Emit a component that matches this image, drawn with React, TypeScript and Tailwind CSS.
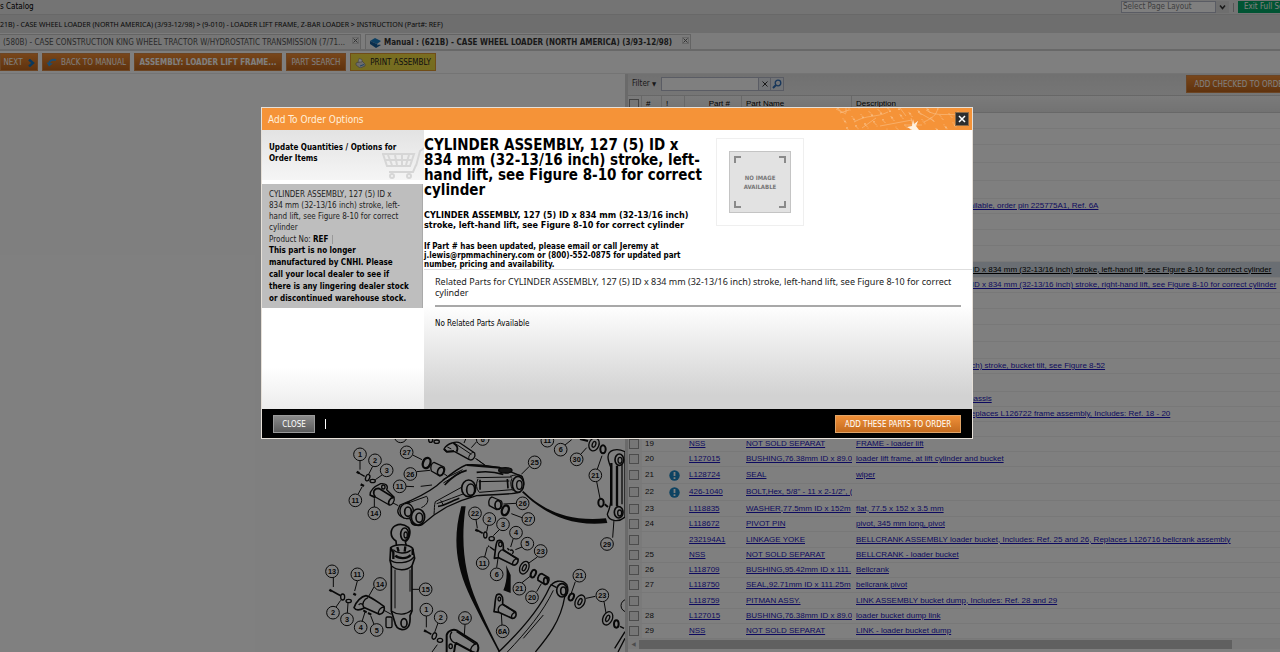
import React from "react";

type Row = {
  h: string;
  no?: string;
  alert?: boolean;
  part?: string;
  name?: string;
  desc?: string;
  indent?: string;
  active?: boolean;
};

const H15 = "h-[15px]";
const H16 = "h-[16px]";
const H17 = "h-[17px]";
const H18 = "h-[18px]";

const ROWS: Row[] = [
  { h: H16 },
  { h: H16 },
  { h: H18 },
  { h: H18 },
  { h: H18 },
  { h: H15, desc: "available, order pin 225775A1, Ref. 6A", indent: "pl-[109px]" },
  { h: H16 },
  { h: H16 },
  { h: H16 },
  {
    h: H16,
    active: true,
    desc: "CYLINDER ASSEMBLY, 127 (5) ID x 834 mm (32-13/16 inch) stroke, left-hand lift, see Figure 8-10 for correct cylinder",
  },
  {
    h: H15,
    desc: "CYLINDER ASSEMBLY, 127 (5) ID x 834 mm (32-13/16 inch) stroke, right-hand lift, see Figure 8-10 for correct cylinder",
  },
  { h: H16 },
  { h: H16 },
  { h: H17 },
  { h: H17 },
  { h: H15, desc: "inch) stroke, bucket tilt, see Figure 8-52", indent: "pl-[113px]" },
  { h: H18 },
  { h: H15, desc: "chassis", indent: "pl-[113px]" },
  { h: H15, desc: "Replaces L126722 frame assembly, Includes: Ref. 18 - 20", indent: "pl-[113px]" },
  { h: H15 },
  { h: H15, no: "19", part: "NSS", name: "NOT SOLD SEPARAT", desc: "FRAME - loader lift" },
  { h: H15, no: "20", part: "L127015", name: "BUSHING,76.38mm ID x 89.0", desc: "loader lift frame, at lift cylinder and bucket" },
  { h: H17, no: "21", alert: true, part: "L128724", name: "SEAL", desc: "wiper" },
  { h: H17, no: "22", alert: true, part: "426-1040", name: "BOLT,Hex, 5/8\" - 11 x 2-1/2\", (" },
  { h: H16, no: "23", part: "L118835", name: "WASHER,77.5mm ID x 152m", desc: "flat, 77.5 x 152 x 3.5 mm" },
  { h: H15, no: "24", part: "L118672", name: "PIVOT PIN", desc: "pivot, 345 mm long, pivot" },
  { h: H16, part: "232194A1", name: "LINKAGE YOKE", desc: "BELLCRANK ASSEMBLY loader bucket, Includes: Ref. 25 and 26, Replaces L126716 bellcrank assembly" },
  { h: H15, no: "25", part: "NSS", name: "NOT SOLD SEPARAT", desc: "BELLCRANK - loader bucket" },
  { h: H15, no: "26", part: "L118709", name: "BUSHING,95.42mm ID x 111.", desc: "Bellcrank" },
  { h: H15, no: "27", part: "L118750", name: "SEAL,92.71mm ID x 111.25m", desc: "bellcrank pivot" },
  { h: H16, part: "L118759", name: "PITMAN ASSY.", desc: "LINK ASSEMBLY bucket dump, Includes: Ref. 28 and 29" },
  { h: H15, no: "28", part: "L127015", name: "BUSHING,76.38mm ID x 89.0", desc: "loader bucket dump link" },
  { h: H15, no: "29", part: "NSS", name: "NOT SOLD SEPARAT", desc: "LINK - loader bucket dump" },
];

const LABELS: [number, number, string][] = [
  [150, 58, "1"], [195, 76, "2"], [230, 106, "3"], [290, 52, "27"], [301, 117, "26"],
  [269, 154, "11"], [136, 196, "11"], [193, 235, "14"], [674, 82, "25"], [752, 44, "6"],
  [800, 73, "30"], [856, 121, "21"], [712, 17, "11"], [518, 12, "6"], [272, 4, "1"],
  [638, 205, "26"], [655, 252, "27"], [495, 235, "22"], [538, 252, "2"], [579, 268, "3"],
  [618, 293, "4"], [652, 326, "5"], [692, 348, "23"], [518, 384, "11"], [560, 418, "6"],
  [628, 461, "21"], [666, 487, "20"], [808, 422, "21"], [877, 481, "23"], [578, 589, "6A"],
  [891, 327, "29"], [66, 409, "13"], [142, 418, "11"], [210, 447, "14"], [347, 463, "15"],
  [69, 533, "2"], [111, 553, "3"], [152, 577, "4"], [200, 585, "5"], [349, 524, "1"],
  [392, 547, "2"], [465, 549, "24"], [952, 512, "2"],
];

function Diagram() {
  return (
    <svg viewBox="0 0 945 651" className="h-[217px] w-[315px] shrink-0" fill="none" stroke="#111" strokeWidth="4" strokeLinejoin="round">
      {/* leader lines */}
      <path
        strokeWidth="3"
        d="M150 77V104M188 94l-12 24M216 120l-20 14M308 60l28 14M320 110l40-4M288 154l24 1M332 154l34-4M144 178l12-22M193 216V190M658 94l-24 24M400 115l12 8M496 70l28 20M500 20l-16 18M468 10l-6 14M765 30l20-16M812 58l18-20M862 102l14-40M860 140l10 50M908 308l4-54M580 207l38-2M604 236l32 12M498 254l4 26M534 270l-4 20M568 284l-18 18M610 310l-8 26M636 336l-20 8M682 366l-28 20M524 366l8-30M560 398l4-28M636 443l28-22M680 470l14-24M796 440l-12 34M856 484l-28 6M882 500l6 34M576 570l-2-34M70 428V456M142 438l-8 30M192 456l-16 28M328 463H306M78 516l14-20M112 534l2-30M156 560l10-32M192 568l-10-26M349 543v34M384 564l-10 28M465 569l-2 30M366 651l16-22M245 202l20 10M222 526l22 12M500 72l30 22M240 98l-5-2"
      />
      {/* bellcrank arm */}
      <path d="M270 210C320 190 350 175 380 152C410 128 440 100 468 90C500 86 530 92 570 98L636 124C646 140 642 160 626 172C600 180 540 178 500 182C470 190 430 206 410 216L372 240L338 268C324 276 304 270 300 250C280 254 260 240 264 224Z" fill="#fff" />
      <path strokeWidth="6" d="M272 216L300 200M304 260C308 274 328 272 338 264M470 90L570 98" />
      <path d="M300 202L350 184C358 196 352 210 334 218M372 238C374 222 372 212 376 200L456 156M500 128L606 126M504 132C496 150 500 162 508 172L606 164M506 140L598 138M380 206C410 196 440 184 462 176M392 196l8 14M600 124C612 120 630 116 638 126M606 130c-6 12-4 26 4 38M398 134l60-30M400 144l60-36" strokeWidth="3" />
      <path strokeWidth="5" d="M404 150C420 132 446 112 470 106M500 112C530 108 560 112 580 118M384 214C400 214 430 196 448 190M510 134v30M592 132l2 28" />
      <ellipse cx="290" cy="228" rx="20" ry="23" fill="#fff" />
      <ellipse cx="294" cy="230" rx="10" ry="14" strokeWidth="5" />
      <ellipse cx="324" cy="246" rx="20" ry="24" fill="#fff" strokeWidth="5" />
      <ellipse cx="328" cy="248" rx="10" ry="14" strokeWidth="5" />
      <ellipse cx="476" cy="160" rx="21" ry="25" fill="#fff" strokeWidth="5" />
      <ellipse cx="482" cy="164" rx="12" ry="17" strokeWidth="5" />
      <ellipse cx="624" cy="148" rx="17" ry="24" fill="#fff" strokeWidth="5" />
      <ellipse cx="628" cy="150" rx="8" ry="13" strokeWidth="4" />
      <ellipse cx="586" cy="106" rx="20" ry="8" fill="#333" />
      {/* top pin */}
      <path d="M402 42C412 24 440 18 450 24L494 54C498 66 488 78 478 74L434 50L410 50Z" fill="#fff" />
      <path strokeWidth="6" d="M402 42L410 50L432 48M430 24C440 30 446 40 440 50" />
      <path strokeWidth="3" d="M436 26l48 32M478 74c-6-8 4-22 14-22M412 36l12 6" />
      <ellipse cx="362" cy="14" rx="6" ry="8" /><ellipse cx="380" cy="20" rx="8" ry="5" />
      {/* seals and bushings */}
      <ellipse cx="350" cy="84" rx="11" ry="16" strokeWidth="7" transform="rotate(20 350 84)" />
      <path d="M372 82L402 96C408 106 398 124 388 122L364 108C360 96 364 84 372 82Z" fill="#fff" />
      <ellipse cx="392" cy="109" rx="9" ry="13" strokeWidth="5" transform="rotate(20 392 109)" />
      <path d="M546 186L574 198C580 210 572 224 560 224L538 212C534 200 538 188 546 186Z" fill="#fff" />
      <ellipse cx="564" cy="210" rx="9" ry="13" strokeWidth="5" />
      <ellipse cx="586" cy="226" rx="10" ry="15" strokeWidth="7" transform="rotate(20 586 226)" />
      {/* left pin group */}
      <path strokeWidth="7" d="M140 110l8 5M152 148l10 5" />
      <path d="M146 114l18 10" />
      <ellipse cx="173" cy="128" rx="6" ry="10" transform="rotate(20 173 128)" /><ellipse cx="188" cy="138" rx="8" ry="5" />
      <path d="M180 180C180 168 190 156 212 146C228 144 236 152 230 164L252 186C256 198 246 212 238 210L196 186Z" fill="#fff" />
      <path strokeWidth="5" d="M180 180L196 188M196 186C186 172 192 160 206 160L252 188M238 210c-6-8 2-22 12-22" />
      <ellipse cx="220" cy="156" rx="5" ry="6" />
      {/* sweep curves */}
      <path fill="#111" stroke="none" d="M454 214h13C450 330 466 420 500 500C524 556 550 610 572 651h-6C532 585 496 520 474 470C434 380 430 300 454 214Z" />
      <path fill="#111" stroke="none" d="M640 168C690 216 760 262 888 250l4 14C770 278 690 224 636 172Z" />
      <path fill="#111" stroke="none" d="M588 390L602 420V474L580 466C590 440 592 420 588 390Z" />
      {/* link */}
      <path d="M894 66C894 44 920 38 945 50V246C925 264 896 258 892 238C896 226 902 214 902 200V96C898 86 894 76 894 66Z" fill="#fff" />
      <path strokeWidth="7" d="M904 84V212M921 92V214" />
      <path d="M936 88V208" />
      <ellipse cx="928" cy="74" rx="13" ry="17" strokeWidth="5" />
      <ellipse cx="930" cy="76" rx="6" ry="9" />
      <ellipse cx="926" cy="232" rx="13" ry="17" strokeWidth="5" />
      <ellipse cx="929" cy="234" rx="6" ry="9" />
      <ellipse cx="852" cy="28" rx="15" ry="20" transform="rotate(20 852 28)" /><ellipse cx="852" cy="28" rx="5" ry="9" transform="rotate(20 852 28)" />
      <ellipse cx="879" cy="43" rx="8" ry="12" strokeWidth="6" /><ellipse cx="873" cy="203" rx="8" ry="12" strokeWidth="6" />
      <path strokeWidth="6" d="M810 12l24 6M884 208l10 8" />
      {/* cylinder */}
      <path d="M258 318C238 306 240 282 256 272C268 266 284 268 296 278C304 290 298 314 286 320L290 338H260Z" fill="#fff" strokeWidth="5" />
      <ellipse cx="284" cy="298" rx="12" ry="19" strokeWidth="5" />
      <ellipse cx="287" cy="300" rx="5" ry="9" />
      <path d="M242 338C256 326 296 326 308 340L314 370L306 392V528L300 542C302 572 294 584 276 584C262 582 256 574 254 560L244 528V392L240 376Z" fill="#fff" strokeWidth="5" />
      <path d="M240 374C256 388 296 386 312 366M246 394C262 408 290 408 306 392M244 528C264 542 288 540 304 526M250 344c10 12 40 14 52 2" />
      <path strokeWidth="7" d="M242 340l8 12v20M308 342v18M262 336l4 14M286 334l-2 16M256 362c10 10 36 10 46-2" />
      <path strokeWidth="3" d="M255 404V520M300 404V470" />
      <rect x="228" y="546" width="18" height="32" rx="4" fill="#fff" />
      <ellipse cx="282" cy="564" rx="9" ry="13" strokeWidth="5" />
      {/* lower-left pin group */}
      <path strokeWidth="7" d="M58 464l8 5M130 476l8 4" />
      <path d="M66 468l26 14" strokeWidth="5" />
      <ellipse cx="98" cy="486" rx="6" ry="9" /><ellipse cx="116" cy="498" rx="8" ry="5" />
      <path d="M132 518C138 500 154 484 168 482C180 484 190 492 222 514C226 526 218 538 208 538L164 518C150 526 138 528 132 518Z" fill="#fff" strokeWidth="5" />
      <path d="M162 518c-8-12 0-26 12-30M146 510c4-6 10-6 14 2M206 538c-4-10 6-22 16-22" />
      <path strokeWidth="6" d="M160 526l10 6M174 534l10 5" />
      {/* lower-centre pin group */}
      <path strokeWidth="7" d="M342 586l6 3" /><path d="M346 588l18 10" strokeWidth="5" />
      <ellipse cx="373" cy="603" rx="6" ry="10" transform="rotate(20 373 603)" /><ellipse cx="390" cy="616" rx="8" ry="6" />
      <path d="M410 655V600C414 586 430 582 440 586L500 624C508 634 506 644 500 655L486 650L438 624C432 634 436 646 430 655Z" fill="#fff" strokeWidth="6" />
      <path d="M426 590C416 602 420 618 436 624M440 590l58 38M482 650c-2-10 6-22 18-24" strokeWidth="4" />
      <ellipse cx="422" cy="634" rx="5" ry="7" />
      {/* middle pin group */}
      <path strokeWidth="7" d="M496 284l8 4" /><path d="M502 286l16 9" strokeWidth="5" />
      <ellipse cx="526" cy="300" rx="5" ry="9" /><ellipse cx="545" cy="311" rx="8" ry="6" />
      <path d="M553 370C556 352 556 330 562 318C572 312 580 320 580 334V346L624 372C626 382 618 392 610 390L566 368Z" fill="#fff" strokeWidth="5" />
      <path d="M566 368c-4-12 4-24 14-24l44 30M608 390c-2-10 6-20 16-18" /><ellipse cx="571" cy="328" rx="5" ry="7" />
      <path d="M592 340l6 6M600 346c8-4 14 6 6 10M534 332l4 3M540 336l14 10" strokeWidth="4" />
      <ellipse cx="643" cy="398" rx="13" ry="20" transform="rotate(25 643 398)" /><ellipse cx="643" cy="398" rx="5" ry="10" transform="rotate(25 643 398)" />
      <ellipse cx="670" cy="416" rx="7" ry="12" strokeWidth="6" transform="rotate(25 670 416)" />
      <path d="M696 416L716 428C720 438 712 450 704 448L684 436C682 426 688 416 696 416Z" fill="#fff" strokeWidth="5" />
      <ellipse cx="707" cy="438" rx="6" ry="10" strokeWidth="5" />
      <path d="M552 530C556 510 554 492 560 480C570 472 580 482 578 500V508L616 530C622 542 614 552 606 550L566 532Z" fill="#fff" strokeWidth="5" />
      <path d="M566 532c-4-12 2-22 12-24l40 26M606 550c-4-8 2-18 12-18" /><ellipse cx="568" cy="492" rx="4" ry="6" />
      {/* loader arm */}
      <path d="M566 651C640 580 690 520 718 458C730 436 756 432 770 448C776 462 774 476 764 486C752 560 710 610 676 651" fill="#fff" />
      <path strokeWidth="3" d="M592 651C650 590 700 530 730 466M700 540L640 610" />
      <ellipse cx="756" cy="466" rx="16" ry="20" strokeWidth="5" /><ellipse cx="760" cy="468" rx="8" ry="12" strokeWidth="5" />
      <path d="M722 448l18 10M945 590L914 640M945 610L924 651" />
      <ellipse cx="784" cy="486" rx="7" ry="11" strokeWidth="6" transform="rotate(25 784 486)" />
      <ellipse cx="810" cy="500" rx="14" ry="21" transform="rotate(25 810 500)" /><ellipse cx="810" cy="500" rx="5" ry="10" transform="rotate(25 810 500)" />
      <ellipse cx="893" cy="550" rx="14" ry="21" transform="rotate(25 893 550)" /><ellipse cx="893" cy="550" rx="5" ry="10" transform="rotate(25 893 550)" />
      <ellipse cx="919" cy="567" rx="7" ry="11" strokeWidth="6" /><path d="M930 574l12 6" />
      <g strokeWidth="3">
        {LABELS.map(([x, y], i) => (
          <circle key={i} cx={x} cy={y} r="19" fill="#fff" />
        ))}
      </g>
      <g fill="#111" stroke="none" fontSize="22" fontWeight="700" textAnchor="middle" fontFamily="Liberation Sans, sans-serif">
        {LABELS.filter(([x, y]) => y > 10 && x < 930).map(([x, y, t], i) => (
          <text key={i} x={x} y={y + 8}>{t}</text>
        ))}
      </g>
    </svg>
  );
}

const orangeBtn =
  "flex h-[18px] shrink-0 items-center justify-center whitespace-nowrap border border-[#d88a48] bg-gradient-to-b from-[#f08c34] to-[#c0661c] pt-px text-[8px] leading-none text-white";

function TabClose() {
  return (
    <button aria-label="Close tab" className="ml-auto flex h-[7px] w-[7px] shrink-0 items-center justify-center self-start border border-[#d0d0d0]">
      <svg viewBox="0 0 5 5" className="h-[5px] w-[5px]" stroke="#666"><path d="m.5.5 4 4M4.500.5l-4 4" /></svg>
    </button>
  );
}

function Toolbar() {
  return (
    <div className="flex h-[23px] shrink-0 items-center gap-1 overflow-hidden border-b border-[#e8e8e8] bg-white">
      <button className={orangeBtn + " w-[38px] gap-1"}>
        NEXT
        <svg viewBox="0 0 8 8" className="h-[8px] w-[8px]" fill="none" stroke="#1471b8" strokeWidth="2.4"><path d="M2 .5 6 4 2 7.500" /></svg>
      </button>
      <button className={orangeBtn + " w-[88px] gap-1"}>
        <svg viewBox="0 0 11 10" className="h-[10px] w-[11px]" fill="none" stroke="#3b9be0" strokeWidth="2"><path d="M10 2C6 1 3 3 3 6" /><path d="M.5 4.500 3 8.500 7 5.500Z" fill="#3b9be0" stroke="none" /></svg>
        BACK TO MANUAL
      </button>
      <button className={orangeBtn + " w-[148px] font-bold"}>ASSEMBLY: LOADER LIFT FRAME...</button>
      <button className={orangeBtn + " w-[60px]"}>PART SEARCH</button>
      <button className="flex h-[18px] w-[86px] shrink-0 items-center justify-center gap-1 whitespace-nowrap border border-[#e09a30] bg-gradient-to-b from-[#f4dc40] to-[#e8d840] pt-px text-[8px] leading-none text-[#222]">
        <svg viewBox="0 0 11 10" className="h-[10px] w-[11px]"><path d="M1 5 7 3l3 3v2L5 10 1 7Z" fill="#d8d8d8" stroke="#777" strokeWidth=".6" /><path d="M3 4 4 .5 7 1.500V4Z" fill="#fff" stroke="#888" strokeWidth=".6" /><path d="m5 8 4-1.500" stroke="#3a86c8" /></svg>
        PRINT ASSEMBLY
      </button>
    </div>
  );
}

function PartsPanel() {
  const link = "text-[#1a14c0] underline";
  return (
    <section className="flex min-w-0 flex-1 flex-col overflow-hidden border-l-3 border-[#d4d4d4] bg-white">
      <div className="flex h-[22px] shrink-0 items-center border-b border-[#cfcfcf] bg-gradient-to-b from-[#e2e2e2] to-[#ececec] pb-px pl-1 text-[8px] text-[#333]">
        <label htmlFor="filter" className="w-[29px] whitespace-nowrap">Filter <span className="text-[6px]">▼</span></label>
        <input id="filter" className="h-[14px] w-[98px] border border-[#b5b8c8] bg-white px-1" />
        <button aria-label="Clear" className="flex h-[14px] w-[12px] items-center justify-center border-y border-r border-[#b5b8c8] bg-[#e4e8ee]">
          <svg viewBox="0 0 6 6" className="h-[6px] w-[6px]" stroke="#333"><path d="m.5.5 5 5M5.500.5l-5 5" /></svg>
        </button>
        <button aria-label="Search" className="flex h-[14px] w-[13px] items-center justify-center border-y border-r border-[#b5b8c8] bg-[#e4e8ee]">
          <svg viewBox="0 0 10 10" className="h-[10px] w-[10px]" fill="none" stroke="#2f6db5"><circle cx="6" cy="4" r="2.800" strokeWidth="1.300" /><path d="M4 6 1 9" strokeWidth="2" /></svg>
        </button>
        <div className="min-w-0 flex-1" />
        <button className={orangeBtn + " -mr-4 w-[110px]"}>ADD CHECKED TO ORDER</button>
      </div>
      <table className="w-full table-fixed border-separate border-spacing-0 whitespace-nowrap font-['Liberation_Sans',Arial,sans-serif] text-[8px] leading-[10px] text-[#222]">
        <colgroup>
          <col className="w-[14px]" /><col className="w-[20px]" /><col className="w-[23px]" /><col className="w-[57px]" /><col className="w-[110px]" /><col />
        </colgroup>
        <thead>
          <tr className="h-[17px] bg-gradient-to-b from-[#f6f6f6] to-[#e4e4e4] text-left text-black">
            <th className="border-b border-r border-[#d0d0d0] p-0 align-middle">
              <input type="checkbox" aria-label="Select all" className="ml-px block h-[10px] w-[10px] appearance-none border border-[#888] bg-[#ececec]" />
            </th>
            <th className="border-b border-r border-[#d0d0d0] py-0 pl-1 font-normal">#</th>
            <th className="border-b border-r border-[#d0d0d0] py-0 pl-1 font-normal">!</th>
            <th className="border-b border-r border-[#d0d0d0] py-0 pr-[11px] text-right font-normal">Part #</th>
            <th className="border-b border-r border-[#d0d0d0] py-0 pl-1 font-normal">Part Name</th>
            <th className="border-b border-[#d0d0d0] py-0 pl-1 font-normal">Description</th>
          </tr>
        </thead>
        <tbody>
          {ROWS.map((r, i) => {
            const cell = "overflow-hidden border-b border-[#f0f0f0] py-0 pr-0 align-middle";
            return (
              <tr key={i} className={r.h + (r.active ? " bg-[#d4dde6]" : "")}>
                <td className={cell + " bg-[#f4f4f4] pl-px"}>
                  <input type="checkbox" aria-label={"Select row " + (i + 1)} className="block h-[10px] w-[10px] appearance-none border border-[#999] bg-[#ececec]" />
                </td>
                <td className={cell + " pl-[3px]"}>{r.no}</td>
                <td className={cell + " pl-[7px]"}>
                  {r.alert && (
                    <svg viewBox="0 0 11 11" className="block h-[11px] w-[11px]"><circle cx="5.500" cy="5.500" r="5.200" fill="#1c86c4" /><path d="M5.500 2v4M5.500 7.300v1.700" stroke="#fff" strokeWidth="1.800" /></svg>
                  )}
                </td>
                <td className={cell + " pl-1"}>{r.part && <a href="#" className={link}>{r.part}</a>}</td>
                <td className={cell + " pl-1"}>{r.name && <a href="#" className={link}>{r.name}</a>}</td>
                <td className={cell + " " + (r.indent ?? "pl-1")}>
                  {r.desc && <a href="#" className={r.active ? "text-black underline" : link}>{r.desc}</a>}
                </td>
              </tr>
            );
          })}
        </tbody>
      </table>
      <div className="flex h-[10px] shrink-0 items-center bg-[#f4f4f4]">
        <span className="w-[11px] text-center text-[6px] leading-none text-[#999]">◀</span>
        <div className="h-[9px] w-[593px] bg-[#c0c0c0]" />
      </div>
    </section>
  );
}

function Splatter() {
  const dots = Array.from({ length: 110 }, (_, i) => {
    const t = (i * 37) % 97;
    return [4 + ((i * 53) % 128), (t * 22) / 97, i % 5 === 0 ? 0.9 : 0.5] as const;
  });
  return (
    <svg viewBox="0 0 138 22" className="h-[22px] w-[138px]" stroke="#fbd0a4" fill="#fbd0a4">
      <path fill="none" strokeWidth=".6" opacity=".75" d="M2 1l10 5M6 5l9-3M12 0v5M20 14c14-8 22-4 34-10M28 20l14-10M46 18l32-6M66 0l6 8M80 22l-3-12M76 22l8-9M70 17h18M84 4l16 9M92 2c12 8 20 2 40 6M104 0c-2 8-6 10-14 14" />
      <path stroke="none" fill="#fff2e0" d="m79 11 1 5 4-3-2 5 3 4h-7l-5-3 5-1Z" />
      {dots.map(([x, y, r], i) => <circle key={i} cx={x} cy={y} r={r} stroke="none" opacity=".7" />)}
    </svg>
  );
}

function NoImage() {
  return (
    <svg viewBox="0 0 62 62" role="img" aria-label="No image available" className="h-[62px] w-[62px]">
      <rect x=".5" y=".5" width="61" height="61" fill="#e2e2e2" stroke="#c4c4c4" />
      <path d="M6 12V6h6M50 6h6v6M6 50v6h6M50 56h6v-6" fill="none" stroke="#8a8a8a" strokeWidth="2" />
      <g fill="#777" fontFamily="'DejaVu Sans Condensed','Noto Sans',sans-serif" fontSize="6" fontWeight="700" textAnchor="middle">
        <text x="31" y="29">NO IMAGE</text>
        <text x="31" y="38">AVAILABLE</text>
      </g>
    </svg>
  );
}

function OrderDialog() {
  return (
    <div role="dialog" aria-label="Add To Order Options" className="flex w-[712px] flex-col border border-[#e6e0d8] bg-white text-black">
      <header className="flex h-[22px] items-center bg-[#f59338] pl-[6px]">
        <h2 className="flex-1 pt-[2px] text-[10px] leading-3 text-[#fff0dc]">Add To Order Options</h2>
        <div className="grid items-center justify-items-end">
          <div className="col-start-1 row-start-1"><Splatter /></div>
          <button aria-label="Close dialog" className="col-start-1 row-start-1 mr-[3px] flex h-[14px] w-[14px] items-center justify-center border border-[#8a6a48] bg-[#2e2e2e]">
            <svg viewBox="0 0 8 8" className="h-[8px] w-[8px]" stroke="#fff" strokeWidth="1.500"><path d="m1 1 6 6M7 1 1 7" /></svg>
          </button>
        </div>
      </header>
      <div className="flex min-h-[279px]">
        <aside className="flex w-[162px] shrink-0 flex-col bg-gradient-to-b from-white from-85% to-[#ececec]">
          <div className="grid h-[50px] items-start bg-gradient-to-b from-[#e3e3e3] to-[#f5f5f5]">
            <svg viewBox="0 0 42 34" className="col-start-1 row-start-1 h-[34px] w-[42px] self-end justify-self-end" fill="none" stroke="#d6d6d6" strokeWidth="2">
              <path d="M0 8h32l-4 12H5L1 8M34 20 38 5l4-3M7 26h24l3-7M6 9l4 10M13 9l2 10M20 9v10M27 9l-3 10M2 14h27" />
              <circle cx="10" cy="30" r="2" /><circle cx="27" cy="30" r="2" />
            </svg>
            <p className="col-start-1 row-start-1 w-[142px] pl-[7px] pt-3 text-[8px] font-bold leading-[11px]">Update Quantities / Options for Order Items</p>
          </div>
          <div className="mr-px mt-1 h-[124px] border-r border-[#aaa] bg-[#bebebe] pl-[7px] pt-[5px] text-[8px]">
            <p className="w-[134px] leading-[11px] text-[#222]">CYLINDER ASSEMBLY, 127 (5) ID x 834 mm (32-13/16 inch) stroke, left-hand lift, see Figure 8-10 for correct cylinder</p>
            <p className="pt-px leading-[11px] text-[#222]">Product No: <span className="border-r border-[#999] pr-1 font-bold text-black">REF</span></p>
            <p className="whitespace-nowrap font-bold leading-3">
              This part is no longer<br />
              manufactured by CNHI. Please<br />
              call your local dealer to see if<br />
              there is any lingering dealer stock<br />
              or discontinued warehouse stock.
            </p>
          </div>
        </aside>
        <div className="flex min-w-0 flex-1 flex-col">
          <div className="flex h-[140px] items-start border-b border-[#dedede] pt-2 font-bold">
            <div className="w-[288px]">
              <h1 className="whitespace-nowrap text-[15px] leading-[15px]">
                CYLINDER ASSEMBLY, 127 (5) ID x<br />
                834 mm (32-13/16 inch) stroke, left-<br />
                hand lift, see Figure 8-10 for correct<br />
                cylinder
              </h1>
              <p className="mt-3 w-[276px] text-[9px] leading-[10px]">CYLINDER ASSEMBLY, 127 (5) ID x 834 mm (32-13/16 inch) stroke, left-hand lift, see Figure 8-10 for correct cylinder</p>
              <p className="mt-3 w-[264px] text-[8px] leading-[9px]">If Part # has been updated, please email or call Jeremy at j.lewis@rpmmachinery.com or (800)-552-0875 for updated part number, pricing and availability.</p>
            </div>
            <div className="ml-1 flex h-[88px] w-[88px] items-center justify-center border border-[#efefef]"><NoImage /></div>
          </div>
          <div className="flex-1 bg-gradient-to-b from-white from-25% to-[#d2d2d2] to-90% px-[11px] pt-[6px]">
            <h3 className="border-b-2 border-[#a8a8a8] pb-[7px] font-['Noto_Sans',sans-serif] text-[9px] leading-[11px] text-[#222]">Related Parts for CYLINDER ASSEMBLY, 127 (5) ID x 834 mm (32-13/16 inch) stroke, left-hand lift, see Figure 8-10 for correct cylinder</h3>
            <p className="mt-[11px] text-[8px] leading-3">No Related Parts Available</p>
          </div>
        </div>
      </div>
      <footer className="flex h-[29px] items-center bg-black px-[11px] pt-px text-[8px] leading-none text-white">
        <button className="flex h-[18px] w-[42px] items-center justify-center border border-[#9a9a9a] bg-gradient-to-b from-[#8a8a8a] to-[#5c5c5c] pt-px">CLOSE</button>
        <span className="ml-[10px] h-[10px] w-px bg-white" />
        <button className="ml-auto flex h-[18px] w-[126px] items-center justify-center border border-[#e0a468] bg-gradient-to-b from-[#f09038] to-[#c46c20] pt-px">ADD THESE PARTS TO ORDER</button>
      </footer>
    </div>
  );
}

export default function App() {
  return (
    <div className="relative min-h-screen overflow-hidden bg-white font-['DejaVu_Sans_Condensed','Noto_Sans',sans-serif] text-black">
      <div className="flex min-h-screen flex-col">
        <header className="flex h-[15px] items-center justify-between overflow-hidden border-b border-[#d0d0d0] bg-[#e9e9e9]">
          <span className="text-[8px] leading-[10px]">s Catalog</span>
          <div className="-mr-[18px] flex items-center gap-1 text-[8px]">
            <select aria-label="Page layout" className="h-[12px] w-[95px] appearance-none border border-[#b5b8c8] bg-white px-px leading-[10px] text-[#808080]">
              <option>Select Page Layout</option>
            </select>
            <svg viewBox="0 0 10 12" className="-ml-1 h-[12px] w-[13px] bg-[#dcdcdc]" fill="none" stroke="#333" strokeWidth="1.500"><path d="m2.500 4.500 2.500 3 2.500-3" /></svg>
            <span className="h-[9px] w-px bg-[#aaa]" />
            <button className="h-[12px] w-[60px] whitespace-nowrap bg-[#00a866] text-left leading-none text-white"><span className="pl-[6px]">Exit Full Screen</span></button>
          </div>
        </header>
        <nav aria-label="Breadcrumb" className="flex h-[18px] items-center whitespace-nowrap bg-[#dcdcdc] pt-px font-['Noto_Sans',sans-serif] text-[7px] leading-[10px] text-[#111]">
          21B) - CASE WHEEL LOADER (NORTH AMERICA) (3/93-12/98) &gt; (9-010) - LOADER LIFT FRAME, Z-BAR LOADER &gt; INSTRUCTION (Part#: REF)
        </nav>
        <div className="flex h-[18px] shrink-0 items-end gap-1 border-b-2 border-[#d0d0d0] bg-[#f8f8f8] text-[8px] leading-[14px]">
          <div className="flex h-[15px] w-[361px] items-center border-r border-t border-[#c8c8c8] bg-[#ececec] pl-[3px] pr-px pt-[2px] text-[#555]">
            <a href="#" className="whitespace-nowrap">(580B) - CASE CONSTRUCTION KING WHEEL TRACTOR W/HYDROSTATIC TRANSMISSION (7/71...</a>
            <TabClose />
          </div>
          <div className="flex h-[15px] w-[326px] items-center border-x border-t border-[#c8c8c8] bg-[#f4f4f4] pl-1 pr-px pt-[2px] font-bold text-[#333]">
            <svg viewBox="0 0 11 10" className="mr-[3px] h-[10px] w-[11px] shrink-0"><path d="M0 3 5 0l6 3-4 3Z" fill="#1b7fc4" /><path d="M0 3v3l6 4 5-3-4-1Z" fill="#155f9c" /><path d="m7 7 4-2" stroke="#fff" strokeWidth=".7" /></svg>
            <a href="#" className="whitespace-nowrap">Manual : (621B) - CASE WHEEL LOADER (NORTH AMERICA) (3/93-12/98)</a>
            <TabClose />
          </div>
        </div>
        <Toolbar />
        <main className="flex flex-1">
          <section className="flex w-[625px] shrink-0 items-end justify-end overflow-hidden bg-white"><Diagram /></section>
          <PartsPanel />
        </main>
      </div>
      <div className="absolute inset-0 flex items-start bg-black/50 pl-[261px] pt-[107px]">
        <OrderDialog />
      </div>
    </div>
  );
}
